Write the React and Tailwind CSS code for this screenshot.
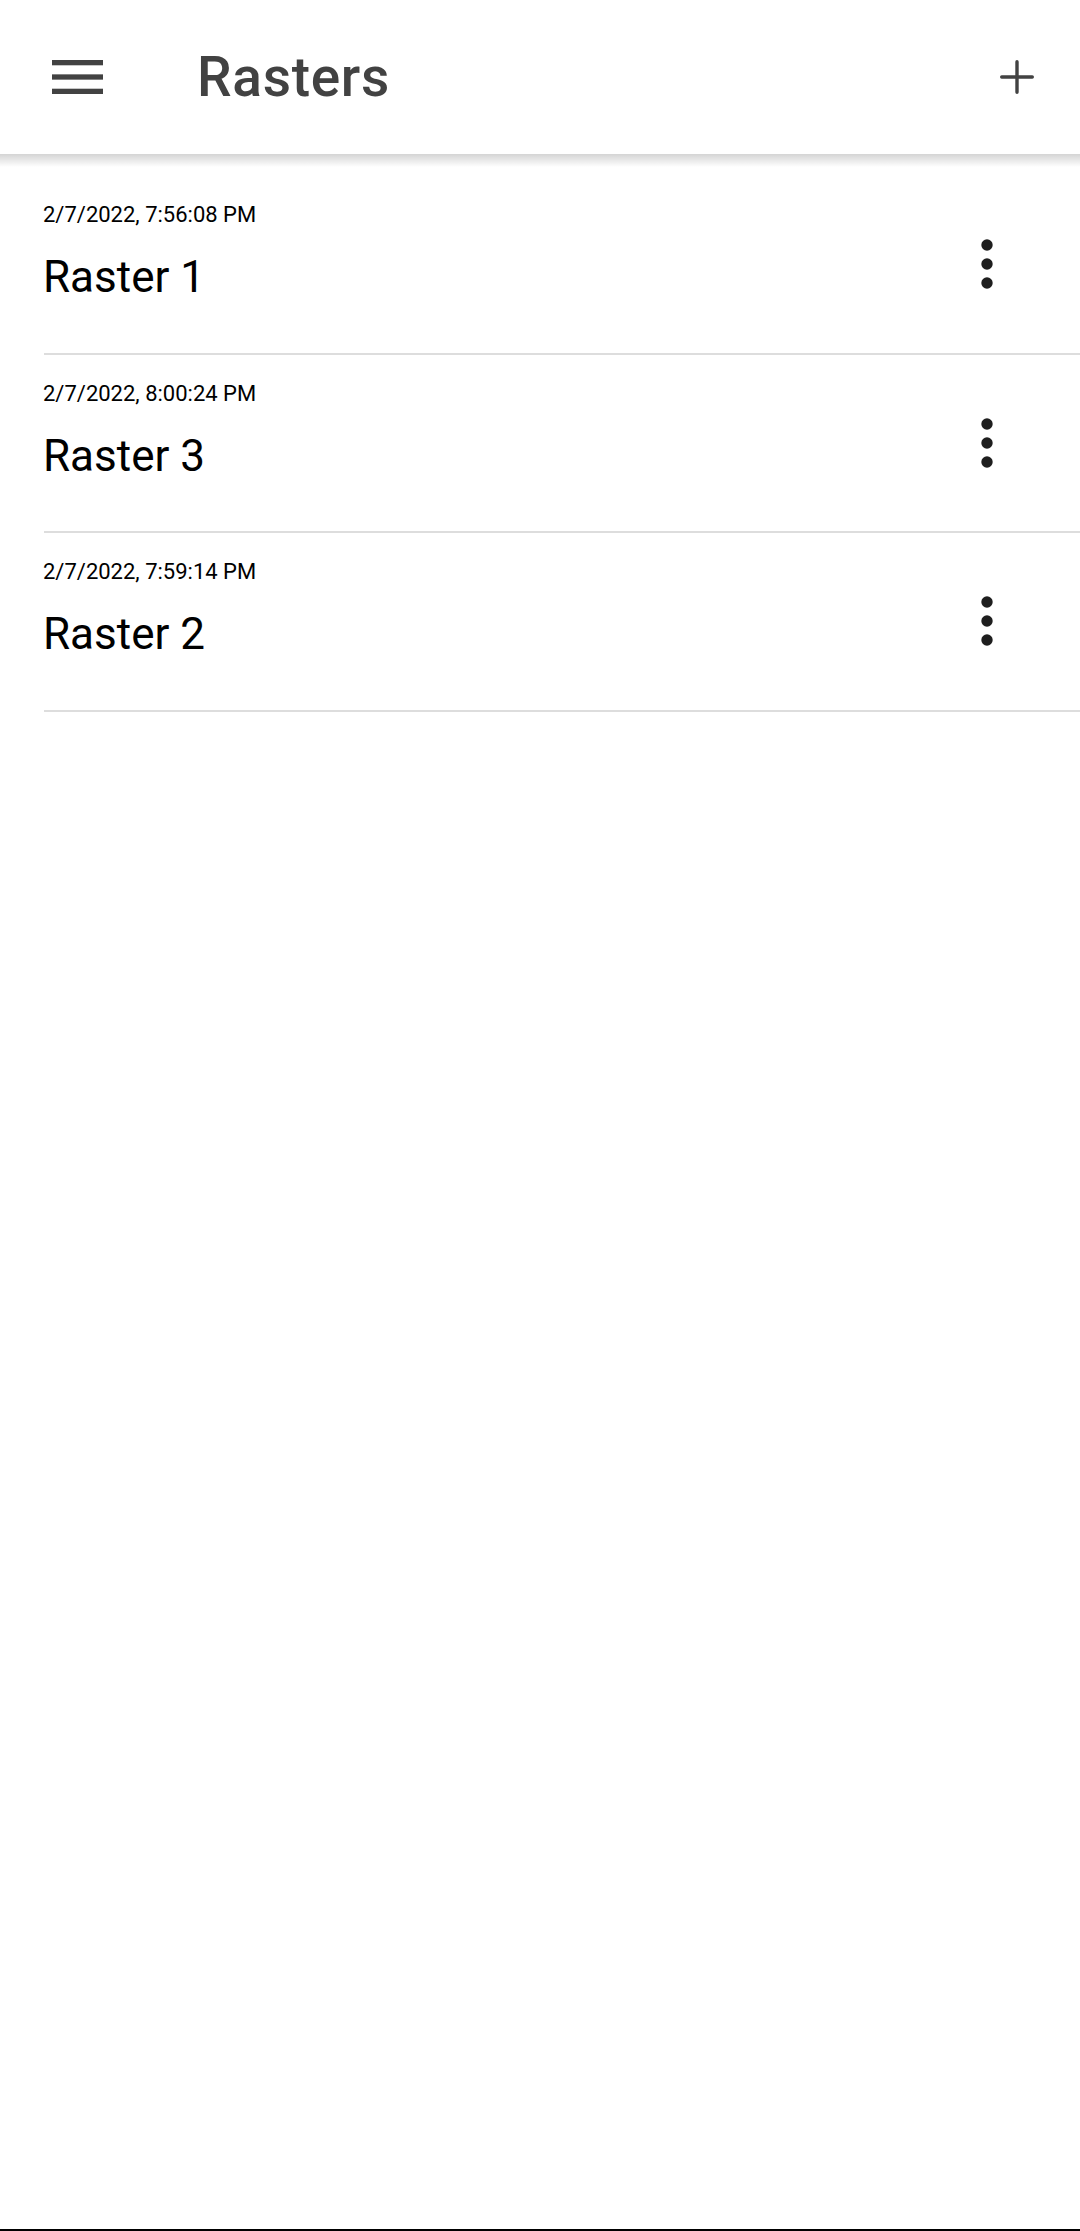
import React from 'react';

const rasters = [
    { date: '2/7/2022, 7:56:08 PM', name: 'Raster 1' },
    { date: '2/7/2022, 8:00:24 PM', name: 'Raster 3' },
    { date: '2/7/2022, 7:59:14 PM', name: 'Raster 2' },
];

function MenuIcon() {
    return (
        <svg width="51" height="34" viewBox="0 0 51 34" className="block">
            <rect x="0" y="0" width="51" height="5.3" fill="#424242" />
            <rect x="0" y="14.35" width="51" height="5.3" fill="#424242" />
            <rect x="0" y="28.7" width="51" height="5.3" fill="#424242" />
        </svg>
    );
}

function AddIcon() {
    return (
        <svg width="34" height="34" viewBox="0 0 34 34" className="block">
            <path d="M17 1.7v30.6M1.7 17h30.6" stroke="#424242" strokeWidth="3.4" strokeLinecap="round" fill="none" />
        </svg>
    );
}

function MoreIcon() {
    return (
        <svg width="12" height="50" viewBox="0 0 12 50" className="block">
            <circle cx="6" cy="6" r="5.7" fill="#1e1e1e" />
            <circle cx="6" cy="25" r="5.7" fill="#1e1e1e" />
            <circle cx="6" cy="44" r="5.7" fill="#1e1e1e" />
        </svg>
    );
}

export default function App() {
    return (
        <div className="min-h-[2231px] bg-white flex flex-col font-['Roboto','Liberation_Sans',sans-serif]">
            {/* ヘッダー */}
            <header className="relative z-10 h-[154px] bg-white flex items-center">
                <button className="ml-[52px] w-[51px] flex items-center justify-center">
                    <MenuIcon />
                </button>
                <h1 className="ml-[94px] flex-1 text-[55px] leading-none font-medium tracking-[0.7px] text-[#424242]">Rasters</h1>
                <button className="mr-[46px] w-[34px] flex items-center justify-center">
                    <AddIcon />
                </button>
                <div className="absolute left-0 right-0 top-full h-[13px] bg-linear-to-b from-[rgba(0,0,0,0.17)] to-transparent" />
            </header>

            {/* リスト */}
            <main className="flex-1 pt-[22px]">
                {rasters.map((r) => (
                    <div key={r.name} className="pl-[44px]">
                        <div className="h-[178.5px] border-b-[2.3px] border-[#dddddd] flex items-center">
                            <div className="flex-1 self-start pt-[26px] -ml-[1px]">
                                <div className="text-[22px] leading-[26px] text-black">{r.date}</div>
                                <div className="mt-[23px] text-[44px] leading-[52px] text-black">{r.name}</div>
                            </div>
                            <button className="mr-[87px] flex items-center justify-center">
                                <MoreIcon />
                            </button>
                        </div>
                    </div>
                ))}
            </main>

            <div className="h-[2px] bg-black" />
        </div>
    );
}
